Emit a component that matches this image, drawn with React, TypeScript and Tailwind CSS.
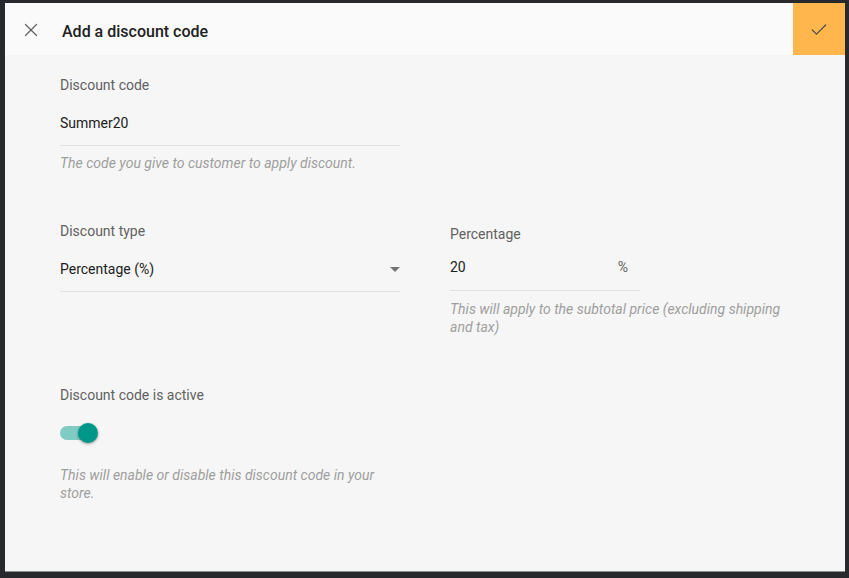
import { X, Check } from "lucide-react";

const font = { fontFamily: "Roboto, 'Liberation Sans', sans-serif" };

function Helper({ children }: { children: React.ReactNode }) {
  return <p className="text-[14px] leading-[18px] italic text-[#9e9e9e]">{children}</p>;
}

export default function App() {
  return (
    <div className="h-[578px] w-[849px] bg-[#27292d] pt-[3px] pl-[5px]" style={font}>
      <div className="flex h-[569px] w-[840px] flex-col bg-[#f6f6f6] border-b border-[#8f8f8f]">
        {/* header */}
        <div className="flex h-[52px] shrink-0 items-center bg-[#fafafa]">
          <button className="ml-[15px] mt-[2px] flex h-[22px] w-[22px] items-center justify-center text-[#616161]">
            <X size={22} strokeWidth={1.3} />
          </button>
          <h1 className="ml-[20px] mt-[5px] text-[16px] font-medium text-[#212121]">Add a discount code</h1>
          <button className="ml-auto flex h-[52px] w-[52px] items-center justify-center bg-[#ffb74d] pt-[2px] text-[#4e4e4e]">
            <Check size={20} strokeWidth={1.5} />
          </button>
        </div>

        {/* body */}
        <div className="pl-[55px] pt-[20px] text-[14px]">
          <div className="w-[340px]">
            <label className="block leading-[20px] text-[#616161]">Discount code</label>
            <div className="mt-[18px] border-b border-[#e0e0e0] pb-[12px] leading-[20px] text-[#212121]">Summer20</div>
            <div className="mt-[8px]">
              <Helper>The code you give to customer to apply discount.</Helper>
            </div>
          </div>

          <div className="mt-[49px] flex gap-[50px]">
            <div className="w-[340px]">
              <label className="block leading-[20px] text-[#616161]">Discount type</label>
              <div className="mt-[18px] flex items-center justify-between border-b border-[#e0e0e0] pb-[12px] leading-[20px] text-[#212121]">
                <span>Percentage (%)</span>
                <span className="h-0 w-0 border-x-[5px] border-t-[5px] border-x-transparent border-t-[#757575]" />
              </div>
            </div>
            <div className="w-[340px] pt-[3px]">
              <label className="block leading-[20px] text-[#616161]">Percentage</label>
              <div className="mt-[13px] flex w-[190px] justify-between border-b border-[#e0e0e0] pb-[13px] leading-[20px] text-[#212121]">
                <span>20</span>
                <span className="mr-[12px] text-[#616161]">%</span>
              </div>
              <div className="mt-[9px]">
                <Helper>This will apply to the subtotal price (excluding shipping and tax)</Helper>
              </div>
            </div>
          </div>

          <div className="mt-[49px] w-[340px]">
            <label className="block leading-[20px] text-[#616161]">Discount code is active</label>
            <div className="relative mt-[18px] h-[20px] w-[40px]">
              <div className="absolute left-0 top-[3px] h-[14px] w-[34px] rounded-full bg-[#80cbc4]" />
              <div className="absolute left-[18px] top-0 h-[20px] w-[20px] rounded-full bg-[#009688] shadow-[0_1px_3px_rgba(0,0,0,0.4)]" />
            </div>
            <div className="mt-[23px]">
              <Helper>This will enable or disable this discount code in your store.</Helper>
            </div>
          </div>
        </div>
      </div>
    </div>
  );
}
